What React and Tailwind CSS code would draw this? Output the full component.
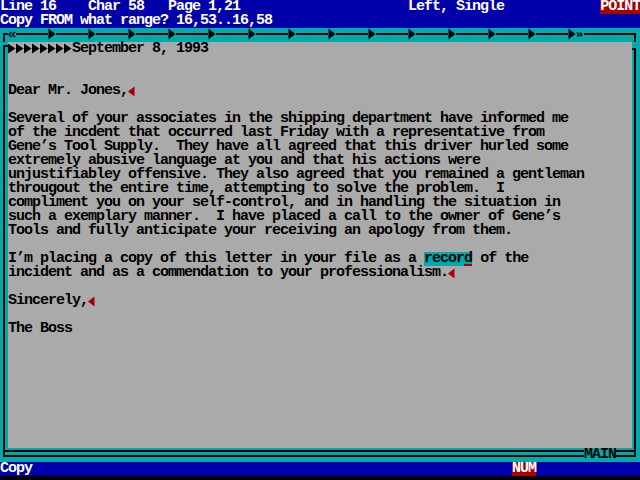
import React from "react";

const BLUE = "bg-[#0000AA]";

// tab marker in the ruler
const RulerTab = () => (
  <svg width="8" height="14" viewBox="0 0 8 14" className="block">
    <polygon points="0.5,0.5 7.5,6 0.5,11.5" fill="#000" />
  </svg>
);

const LeftMargin = () => (
  <svg width="8" height="14" viewBox="0 0 8 14" className="block">
    <path d="M3.5 4 L1 6.5 L3.5 9 M7 4 L4.5 6.5 L7 9" stroke="#000" strokeWidth="1.5" fill="none" />
  </svg>
);

const RightMargin = () => (
  <svg width="8" height="14" viewBox="0 0 8 14" className="block">
    <path d="M1 4.5 L3 6.5 L1 8.5 M4 4.5 L6 6.5 L4 8.5" stroke="#000" strokeWidth="1.5" fill="none" />
  </svg>
);

const TextTab = () => (
  <svg width="8" height="14" viewBox="0 0 8 14" className="inline-block align-top">
    <polygon points="0,1.5 7.5,6.5 0,11.5" fill="#000" />
  </svg>
);

const HardReturn = () => (
  <svg width="8" height="14" viewBox="0 0 8 14" className="inline-block align-top">
    <polygon points="6.5,2.5 0,7.5 6.5,12.5" fill="#AA0000" />
  </svg>
);

const rulerCells = Array.from({ length: 80 }, (_, i) => i);

const Ruler = () => (
  <div className="flex h-[14px] bg-[#00AAAA]">
    {rulerCells.map((i) => {
      if (i === 0)
        return (
          <div key={i} className="w-[8px] pl-[3px] pt-[5px]">
            <div className="h-[9px] border-l-2 border-t-2 border-black" />
          </div>
        );
      if (i === 79)
        return (
          <div key={i} className="w-[8px] pr-[4px] pt-[5px]">
            <div className="h-[9px] border-r-2 border-t-2 border-black" />
          </div>
        );
      if (i === 1)
        return (
          <div key={i} className="w-[8px]">
            <LeftMargin />
          </div>
        );
      if (i === 72)
        return (
          <div key={i} className="w-[8px]">
            <RightMargin />
          </div>
        );
      if (i >= 6 && i <= 71 && (i - 1) % 5 === 0)
        return (
          <div key={i} className="w-[8px]">
            <RulerTab />
          </div>
        );
      return (
        <div key={i} className="w-[8px] pt-[5px]">
          <div className="h-[2px] bg-black" />
        </div>
      );
    })}
  </div>
);

const Line = ({ children }) => (
  <div className="h-[14px] whitespace-pre">{children}</div>
);

const paragraph = [
  "Several of your associates in the shipping department have informed me",
  "of the incdent that occurred last Friday with a representative from",
  "Gene’s Tool Supply.  They have all agreed that this driver hurled some",
  "extremely abusive language at you and that his actions were",
  "unjustifiabley offensive. They also agreed that you remained a gentleman",
  "througout the entire time, attempting to solve the problem.  I",
  "compliment you on your self-control, and in handling the situation in",
  "such a exemplary manner.  I have placed a call to the owner of Gene’s",
  "Tools and fully anticipate your receiving an apology from them.",
];

const Document = () => (
  <div className="h-[406px] bg-[#AAAAAA] text-black">
    <Line>
      <TextTab />
      <TextTab />
      <TextTab />
      <TextTab />
      <TextTab />
      <TextTab />
      <TextTab />
      <TextTab />
      September 8, 1993
    </Line>
    <Line> </Line>
    <Line> </Line>
    <Line>
      Dear Mr. Jones,
      <HardReturn />
    </Line>
    <Line> </Line>
    {paragraph.map((text) => (
      <Line key={text}>{text}</Line>
    ))}
    <Line> </Line>
    <Line>
      I’m placing a copy of this letter in your file as a{" "}
      <span className="inline-block h-[14px] bg-[#00AAAA] align-top">
        recor
        <span className="relative inline-block h-[14px]">
          d
          <span className="absolute bottom-0 left-0 h-[2px] w-[8px] bg-[#AA0000]" />
        </span>
      </span>{" "}
      of the
    </Line>
    <Line>
      incident and as a commendation to your professionalism.
      <HardReturn />
    </Line>
    <Line> </Line>
    <Line>
      Sincerely,
      <HardReturn />
    </Line>
    <Line> </Line>
    <Line>The Boss</Line>
  </div>
);

const Frame = () => (
  <div className="flex h-[420px] bg-[#00AAAA]">
    {/* left edge */}
    <div className="flex w-[8px] flex-col pl-[3px] pt-[3px] pb-[5px]">
      <div className="flex flex-1 flex-col justify-end border-b-2 border-l-2 border-t-2 border-black">
        <div className="mb-[3px] h-[2px] bg-black" />
      </div>
    </div>
    <div className="flex w-[624px] flex-col">
      <Document />
      <div className="flex h-[14px] items-start">
        <div className="flex h-[14px] flex-1 flex-col pt-[2px]">
          <div className="h-[2px] bg-black" />
          <div className="mt-[3px] h-[2px] bg-black" />
        </div>
        <div className="h-[14px] whitespace-pre text-black">MAIN</div>
        <div className="flex h-[14px] w-[16px] flex-col pt-[2px]">
          <div className="h-[2px] bg-black" />
          <div className="mt-[3px] h-[2px] bg-black" />
        </div>
      </div>
    </div>
    {/* right edge */}
    <div className="flex w-[8px] flex-col pr-[4px] pt-[6px] pb-[5px]">
      <div className="flex flex-1 flex-col justify-end border-b-2 border-r-2 border-t-2 border-black">
        <div className="mb-[3px] h-[2px] bg-black" />
      </div>
    </div>
  </div>
);

export default function App() {
  return (
    <div
      className="flex h-[480px] w-[640px] flex-col overflow-hidden bg-black text-[15px] leading-[14px] font-bold tracking-[-1px]"
      style={{ fontFamily: '"Liberation Mono", monospace' }}
    >
      <div className={`flex h-[14px] ${BLUE} text-white whitespace-pre`}>
        <span>{"Line 16    Char 58   Page 1,21                     Left, Single            "}</span>
        <span className="w-[40px] overflow-hidden bg-[#AA0000]">POINT</span>
      </div>
      <div className={`h-[14px] ${BLUE} text-white whitespace-pre`}>
        Copy FROM what range? 16,53..16,58
      </div>
      <Ruler />
      <Frame />
      <div className={`flex h-[14px] ${BLUE} text-white whitespace-pre`}>
        <span>{"Copy                                                            "}</span>
        <span className="bg-[#AA0000]">NUM</span>
      </div>
    </div>
  );
}
